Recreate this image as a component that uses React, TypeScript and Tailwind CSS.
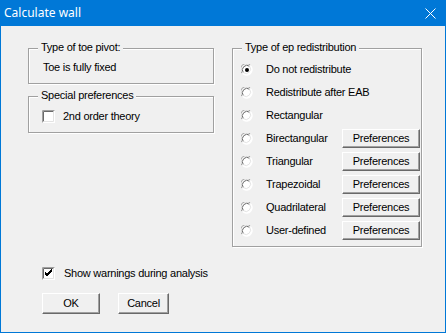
import React from "react";

const font = { fontFamily: '"Liberation Sans", Arial, sans-serif' };

function Radio({ checked }: { checked?: boolean }) {
  return (
    <svg width="12" height="12" viewBox="0 0 12 12" className="shrink-0">
      <circle cx="6" cy="6" r="5.5" fill="#ffffff" />
      <path d="M1.2 9.4 A5.5 5.5 0 0 1 9.4 1.2" stroke="#a0a0a0" strokeWidth="1" fill="none" />
      <path d="M2.3 8.6 A4.5 4.5 0 0 1 8.6 2.3" stroke="#696969" strokeWidth="1" fill="none" />
      <path d="M9.4 1.2 A5.5 5.5 0 0 1 1.2 9.4" stroke="#ffffff" strokeWidth="1" fill="none" />
      <path d="M8.6 2.3 A4.5 4.5 0 0 1 2.3 8.6" stroke="#e3e3e3" strokeWidth="1" fill="none" />
      {checked && <circle cx="6" cy="6" r="2" fill="#000000" />}
    </svg>
  );
}

function Checkbox({ checked }: { checked?: boolean }) {
  return (
    <svg width="13" height="13" viewBox="0 0 13 13" className="shrink-0">
      <rect x="0" y="0" width="13" height="13" fill="#ffffff" />
      <path d="M0.5 12.5 V0.5 H12.5" stroke="#a0a0a0" fill="none" />
      <path d="M1.5 11.5 V1.5 H11.5" stroke="#696969" fill="none" />
      <path d="M1.5 11.5 H11.5 V1.5" stroke="#e3e3e3" fill="none" />
      {checked && (
        <path d="M3 6 L5 8 L10 3 M3 7 L5 9 L10 4 M3 5 L5 7 L10 2" stroke="#000000" strokeWidth="1" fill="none" />
      )}
    </svg>
  );
}

const btn =
  "flex items-center justify-center bg-[#f0f0f0] border border-t-white border-l-white border-b-[#696969] border-r-[#696969] shadow-[inset_-1px_-1px_0_#a0a0a0] text-[11px] tracking-[-0.25px] text-black leading-none";

function Group({
  label,
  className,
  children,
}: {
  label: string;
  className: string;
  children?: React.ReactNode;
}) {
  return (
    <div
      className={`relative box-border border border-[#a0a0a0] shadow-[inset_1px_1px_0_#ffffff,1px_1px_0_#ffffff] ${className}`}
    >
      <span className="absolute left-[9px] top-[-8px] px-[3px] bg-[#f0f0f0] text-[11px] tracking-[-0.25px] leading-[13px] text-black whitespace-nowrap">
        {label}
      </span>
      {children}
    </div>
  );
}

const rows: { label: string; checked?: boolean; pref?: boolean }[] = [
  { label: "Do not redistribute", checked: true },
  { label: "Redistribute after EAB" },
  { label: "Rectangular" },
  { label: "Birectangular", pref: true },
  { label: "Triangular", pref: true },
  { label: "Trapezoidal", pref: true },
  { label: "Quadrilateral", pref: true },
  { label: "User-defined", pref: true },
];

export default function App() {
  return (
    <div
      className="w-[446px] h-[333px] box-border flex flex-col bg-[#f0f0f0] border-l border-r border-b border-[#0078d7] overflow-hidden"
      style={font}
    >
      <div className="h-[26px] shrink-0 bg-[#0078d7] flex items-center justify-between pl-[4px] pr-[10px] -mx-px">
        <span
          className="text-white text-[12px] leading-none"
          style={{ fontFamily: '"Noto Sans", "Open Sans", sans-serif' }}
        >
          Calculate wall
        </span>
        <svg width="11" height="11" viewBox="0 0 11 11">
          <path d="M0.5 0.5 L10.5 10.5 M10.5 0.5 L0.5 10.5" stroke="#ffffff" strokeWidth="1" />
        </svg>
      </div>

      <div className="flex flex-col pl-[27px] pt-[22px]">
        <div className="flex gap-[18px]">
          <div className="w-[186px] flex flex-col">
            <Group label="Type of toe pivot:" className="h-[36px] pt-[12px] pl-[14px]">
              <div className="text-[11px] tracking-[-0.25px] leading-[13px] text-black">Toe is fully fixed</div>
            </Group>
            <Group label="Special preferences" className="h-[37px] mt-[12px] pt-[13px] pl-[13px]">
              <div className="flex items-center gap-[8px]">
                <Checkbox />
                <span className="text-[11px] tracking-[-0.25px] leading-[13px] text-black">2nd order theory</span>
              </div>
            </Group>
          </div>
          <Group label="Type of ep redistribution" className="w-[190px] h-[199px] pt-[9px] pl-[8px]">
            <div className="flex flex-col">
              {rows.map((r) => (
                <div key={r.label} className="h-[23px] flex items-center">
                  <Radio checked={r.checked} />
                  <span className="ml-[13px] w-[76px] text-[11px] tracking-[-0.25px] leading-[13px] text-black whitespace-nowrap">
                    {r.label}
                  </span>
                  {r.pref && <div className={`${btn} w-[78px] h-[19px]`}>Preferences</div>}
                </div>
              ))}
            </div>
          </Group>
        </div>

        <div className="flex items-center mt-[20px] ml-[14px] gap-[9px]">
          <Checkbox checked />
          <span className="text-[11px] tracking-[-0.25px] leading-[13px] text-black">Show warnings during analysis</span>
        </div>

        <div className="flex mt-[13px] ml-[14px] gap-[18px]">
          <div className={`${btn} w-[58px] h-[21px]`}>OK</div>
          <div className={`${btn} w-[51px] h-[21px]`}>Cancel</div>
        </div>
      </div>
    </div>
  );
}
